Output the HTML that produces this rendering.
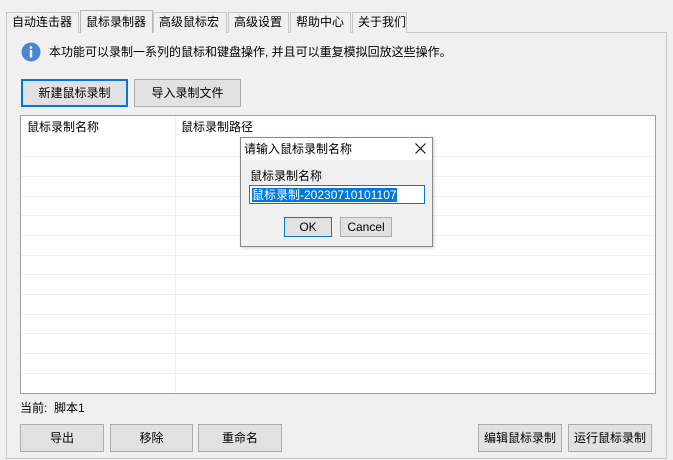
<!DOCTYPE html>
<html><head><meta charset="utf-8"><style>
*{box-sizing:border-box;margin:0;padding:0}
body{width:673px;height:460px;background:#f0f0f0;font-family:"Liberation Sans","Noto Sans CJK SC",sans-serif;font-size:12px;line-height:14px;color:#000;position:relative;overflow:hidden}
.a{position:absolute}
.tab{position:absolute;top:12px;height:21px;border:1px solid #c8c8c8;border-bottom:none;background:#f0f0f0;padding:2px 0 0 5px;font-size:12px}
.btn{position:absolute;background:#e1e1e1;border:1px solid #adadad;text-align:center;font-size:12px}
.line{position:absolute;left:21px;width:633px;height:1px;background:#efefef}
</style></head><body>
<div class="a" style="left:6px;top:32px;width:661px;height:427px;border:1px solid #c8c8c8;background:#f0f0f0"></div>
<div class="tab" style="left:6px;width:73px">自动连击器</div>
<div class="tab" style="left:80px;top:10px;height:23px;width:73px;background:#f0f0f0;border-color:#b8b8b8;padding-top:4px">鼠标录制器</div>
<div class="tab" style="left:153px;width:74px">高级鼠标宏</div>
<div class="tab" style="left:228px;width:61px">高级设置</div>
<div class="tab" style="left:290px;width:61px">帮助中心</div>
<div class="tab" style="left:352px;width:55px">关于我们</div>
<svg class="a" style="left:21px;top:42px" width="20" height="20"><circle cx="10" cy="10" r="9.5" fill="#4a86d6"/><rect x="8.8" y="8" width="2.4" height="7.5" fill="#fff"/><rect x="8.8" y="4.3" width="2.4" height="2.4" fill="#fff"/></svg>
<div class="a" style="left:49px;top:45px">本功能可以录制一系列的鼠标和键盘操作, 并且可以重复模拟回放这些操作。</div>
<div class="btn" style="left:21px;top:79px;width:107px;height:28px;border:2px solid #0078d7;padding-top:5px">新建鼠标录制</div>
<div class="btn" style="left:134px;top:79px;width:107px;height:28px;padding-top:6px">导入录制文件</div>
<div class="a" style="left:20px;top:115px;width:636px;height:279px;background:#fff;border:1px solid #a0a0a0"></div>
<div class="a" style="left:175px;top:116px;width:1px;height:277px;background:#efefef"></div>
<div class="a" style="left:27px;top:120px">鼠标录制名称</div>
<div class="a" style="left:181px;top:120px">鼠标录制路径</div>
<div class="line" style="top:156px"></div><div class="line" style="top:176px"></div><div class="line" style="top:196px"></div><div class="line" style="top:215px"></div><div class="line" style="top:235px"></div><div class="line" style="top:255px"></div><div class="line" style="top:274px"></div><div class="line" style="top:294px"></div><div class="line" style="top:314px"></div><div class="line" style="top:333px"></div><div class="line" style="top:353px"></div><div class="line" style="top:373px"></div>
<div class="a" style="left:240px;top:137px;width:193px;height:110px;border:1px solid #888;background:#f0f0f0;box-shadow:1px 1px 3px rgba(0,0,0,.2)">
<div style="height:22px;background:#fff;padding:4px 0 0 3px">请输入鼠标录制名称</div>
<svg style="position:absolute;right:6px;top:5px" width="11" height="11"><path d="M0.5 0.5L10.5 10.5M10.5 0.5L0.5 10.5" stroke="#000" stroke-width="1"/></svg>
</div>
<div class="a" style="left:250px;top:169px">鼠标录制名称</div>
<div class="a" style="left:249px;top:185px;width:176px;height:19px;background:#fff;border:1px solid #0078d7;padding:2px 0 0 2px"><span style="background:#0078d7;color:#fff">鼠标录制-20230710101107</span></div>
<div class="btn" style="left:284px;top:217px;width:48px;height:20px;border-color:#0078d7;padding-top:2px">OK</div>
<div class="btn" style="left:340px;top:217px;width:52px;height:20px;padding-top:2px">Cancel</div>
<div class="a" style="left:20px;top:401px">当前:&nbsp; 脚本1</div>
<div class="btn" style="left:20px;top:424px;width:84px;height:28px;padding-top:6px">导出</div>
<div class="btn" style="left:110px;top:424px;width:83px;height:28px;padding-top:6px">移除</div>
<div class="btn" style="left:198px;top:424px;width:84px;height:28px;padding-top:6px">重命名</div>
<div class="btn" style="left:478px;top:424px;width:84px;height:28px;padding-top:6px">编辑鼠标录制</div>
<div class="btn" style="left:568px;top:424px;width:84px;height:28px;padding-top:6px">运行鼠标录制</div>
</body></html>
